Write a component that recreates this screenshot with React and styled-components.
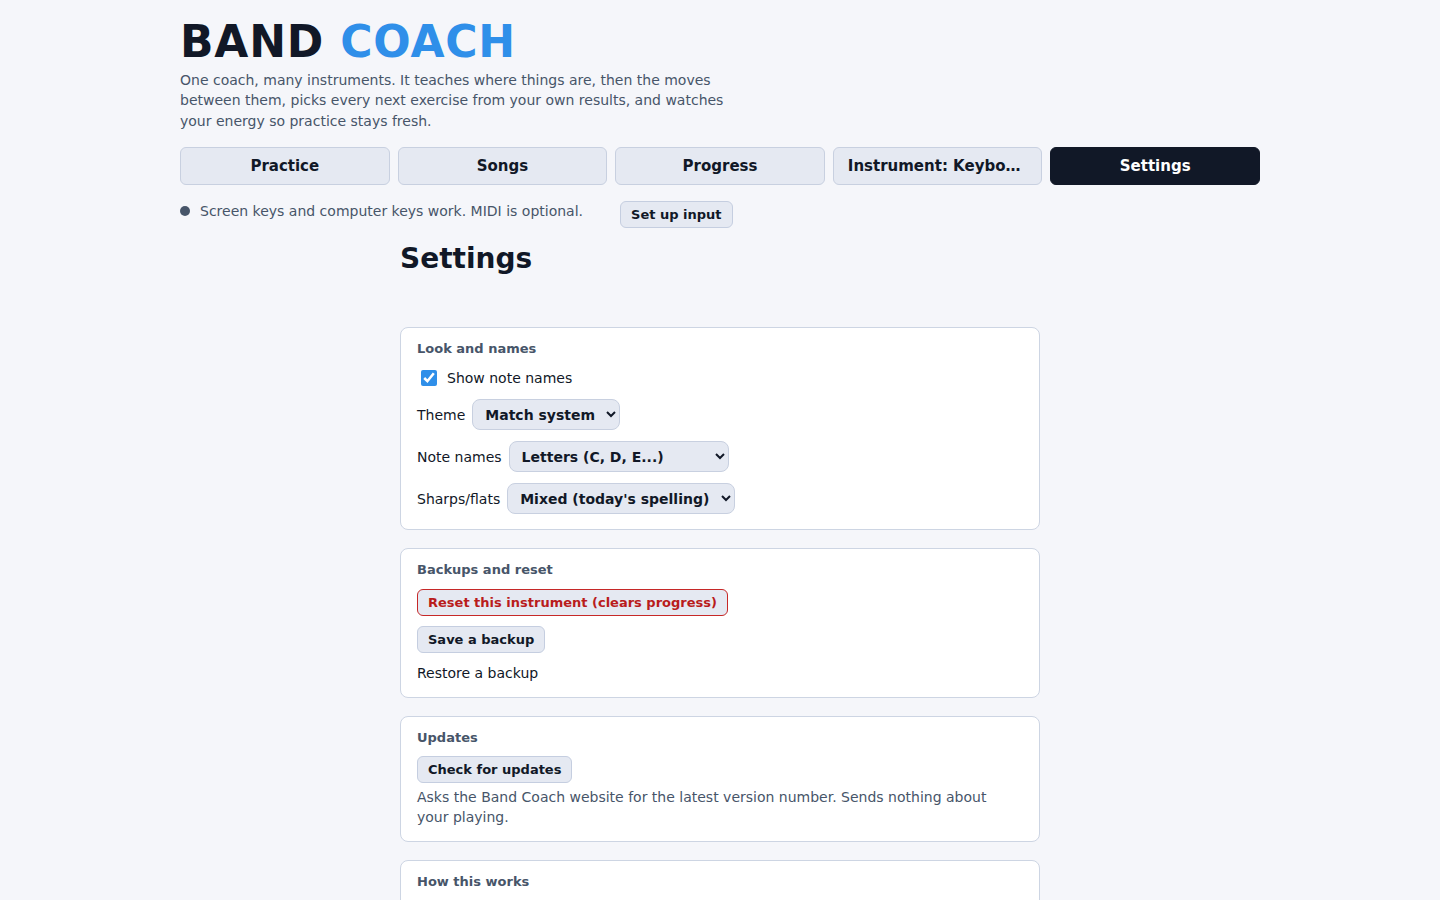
import React, { useState } from 'react'
import styled, { createGlobalStyle } from 'styled-components'

const GlobalStyle = createGlobalStyle`
  html, body {
    margin: 0;
    padding: 0;
    background: #f5f6fa;
    color: #111827;
    font-family: "DejaVu Sans", "Noto Sans", sans-serif;
    font-size: 14px;
  }
  * { box-sizing: border-box; }
`

const TABS = ['Practice', 'Songs', 'Progress', 'Instrument: Keyboard', 'Settings']

export default function App() {
  const [tab, setTab] = useState('Settings')
  const [showNames, setShowNames] = useState(true)

  return (
    <Page>
      <GlobalStyle />
      <Header>
        <Logo>
          BAND <LogoAccent>COACH</LogoAccent>
        </Logo>
        <Intro>
          One coach, many instruments. It teaches where things are, then the moves
          between them, picks every next exercise from your own results, and watches
          your energy so practice stays fresh.
        </Intro>
      </Header>

      <Tabs>
        {TABS.map(name => (
          <Tab key={name} active={name === tab} onClick={() => setTab(name)}>
            {name}
          </Tab>
        ))}
      </Tabs>

      <StatusRow>
        <Status>
          <Dot />
          Screen keys and computer keys work. MIDI is optional.
        </Status>
        <SmallButton>Set up input</SmallButton>
      </StatusRow>

      <Main>
        <PageTitle>Settings</PageTitle>

        <Card gap={11}>
          <CardTitle>Look and names</CardTitle>
          <CheckRow>
            <Checkbox
              type="checkbox"
              checked={showNames}
              onChange={e => setShowNames(e.target.checked)}
            />
            Show note names
          </CheckRow>
          <Field>
            Theme
            <Select width={148} defaultValue="system">
              <option value="system">Match system</option>
              <option value="light">Light</option>
              <option value="dark">Dark</option>
            </Select>
          </Field>
          <Field>
            Note names
            <Select width={220} defaultValue="letters">
              <option value="letters">Letters (C, D, E...)</option>
              <option value="solfege">Solfège (Do, Re, Mi...)</option>
            </Select>
          </Field>
          <Field>
            Sharps/flats
            <Select width={228} defaultValue="mixed">
              <option value="mixed">Mixed (today's spelling)</option>
              <option value="sharps">Sharps</option>
              <option value="flats">Flats</option>
            </Select>
          </Field>
        </Card>

        <Card gap={10}>
          <CardTitle>Backups and reset</CardTitle>
          <div>
            <SmallButton danger>Reset this instrument (clears progress)</SmallButton>
          </div>
          <div>
            <SmallButton>Save a backup</SmallButton>
          </div>
          <Plain>Restore a backup</Plain>
        </Card>

        <Card gap={9}>
          <CardTitle>Updates</CardTitle>
          <div>
            <SmallButton>Check for updates</SmallButton>
          </div>
          <Note tight>
            Asks the Band Coach website for the latest version number. Sends nothing about
            your playing.
          </Note>
        </Card>

        <Card gap={10}>
          <CardTitle>How this works</CardTitle>
          <Note>
            Each exercise is picked from your own results. Short sessions, regular breaks,
            and the coach watches your energy so practice stays fresh.
          </Note>
        </Card>
      </Main>
    </Page>
  )
}

const Page = styled.div`
  max-width: 1080px;
  margin: 0 auto;
  padding: 16px 0 40px;
`

const Header = styled.header`
  display: flex;
  flex-direction: column;
  gap: 2px;
`

const Logo = styled.h1`
  margin: 0;
  font-size: 44px;
  line-height: 52px;
  font-weight: 700;
  letter-spacing: 0.8px;
  color: #111827;
`

const LogoAccent = styled.span`
  color: #2f8fe9;
`

const Intro = styled.p`
  margin: 0;
  max-width: 560px;
  font-size: 14px;
  line-height: 20.4px;
  color: #475569;
`

const Tabs = styled.nav`
  display: grid;
  grid-template-columns: repeat(5, 1fr);
  gap: 8px;
  margin-top: 16px;
`

const Tab = styled.button`
  height: 38px;
  padding: 0 14px;
  border-radius: 6px;
  border: 1px solid ${p => (p.active ? '#111827' : '#c8d0e0')};
  background: ${p => (p.active ? '#111827' : '#e5e9f2')};
  color: ${p => (p.active ? '#ffffff' : '#111827')};
  font-family: inherit;
  font-size: 15px;
  font-weight: 700;
  white-space: nowrap;
  overflow: hidden;
  text-overflow: ellipsis;
  cursor: pointer;
`

const StatusRow = styled.div`
  display: flex;
  align-items: flex-start;
  gap: 37px;
  margin-top: 16px;
`

const Status = styled.div`
  display: flex;
  align-items: center;
  gap: 10px;
  line-height: 20px;
  color: #475569;
`

const Dot = styled.span`
  width: 10px;
  height: 10px;
  border-radius: 50%;
  background: #475569;
`

const SmallButton = styled.button`
  height: 27px;
  padding: 0 10px;
  border-radius: 6px;
  border: 1px solid ${p => (p.danger ? '#c62828' : '#c5cee0')};
  background: #e5e9f2;
  color: ${p => (p.danger ? '#b91c1c' : '#111827')};
  font-family: inherit;
  font-size: 13px;
  font-weight: 700;
  cursor: pointer;
`

const Main = styled.main`
  width: 640px;
  margin: 0 auto;
  display: flex;
  flex-direction: column;
  gap: 18px;
`

const PageTitle = styled.h2`
  margin: 14px 0 33px;
  font-size: 28px;
  line-height: 34px;
  font-weight: 700;
  color: #111827;
`

const Card = styled.section`
  display: flex;
  flex-direction: column;
  gap: ${p => p.gap}px;
  padding: 12px 16px 14px;
  background: #ffffff;
  border: 1px solid #cdd5e3;
  border-radius: 8px;
`

const CardTitle = styled.h3`
  margin: 0;
  font-size: 13px;
  line-height: 18px;
  font-weight: 700;
  color: #475569;
`

const CheckRow = styled.label`
  display: flex;
  align-items: center;
  gap: 10px;
  line-height: 20px;
  margin-top: -1px;
`

const Checkbox = styled.input`
  width: 16px;
  height: 16px;
  margin: 0 0 0 4px;
  accent-color: #2f8fe9;
`

const Field = styled.label`
  display: flex;
  align-items: center;
  gap: 7px;
  line-height: 20px;
  &:last-child {
    margin-bottom: 1px;
  }
`

const Select = styled.select`
  width: ${p => p.width}px;
  height: 31px;
  padding: 0 8px;
  border-radius: 8px;
  border: 1px solid #c8d0e0;
  background: #e5e9f2;
  color: #111827;
  font-family: inherit;
  font-size: 14px;
  font-weight: 700;
`

const Plain = styled.div`
  line-height: 20px;
`

const Note = styled.p`
  margin: ${p => (p.tight ? '-5px' : '0')} 0 0;
  max-width: 580px;
  line-height: 20px;
  color: #475569;
`
